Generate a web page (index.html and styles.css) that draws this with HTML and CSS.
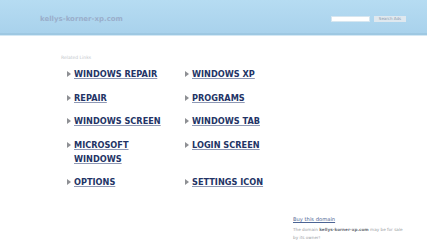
FILE: index.html
```html
<!DOCTYPE html>
<html lang="en">
<head>
    <meta charset="UTF-8">
    <title>kellys-korner-xp.com</title>
    <link rel="stylesheet" href="styles.css">
</head>
<body>

<div class="header">
    <span class="domain">kellys-korner-xp.com</span>
    <form class="search">
        <input type="text" class="search-box">
        <button type="button" class="search-btn">Search Ads</button>
    </form>
</div>

<div class="content">
    <div class="related">Related Links</div>
    <ul class="links">
        <li><a href="#">WINDOWS REPAIR</a></li>
        <li><a href="#">WINDOWS XP</a></li>
        <li><a href="#">REPAIR</a></li>
        <li><a href="#">PROGRAMS</a></li>
        <li><a href="#">WINDOWS SCREEN</a></li>
        <li><a href="#">WINDOWS TAB</a></li>
        <li><a href="#">MICROSOFT WINDOWS</a></li>
        <li><a href="#">LOGIN SCREEN</a></li>
        <li><a href="#">OPTIONS</a></li>
        <li><a href="#">SETTINGS ICON</a></li>
    </ul>

    <div class="sale">
        <a href="#" class="buy">Buy this domain</a>
        <p>The domain <b>kellys-korner-xp.com</b> may be for sale<br>by its owner!</p>
    </div>
</div>

</body>
</html>
```

FILE: styles.css
```css
body {
    margin: 0;
    font-family: "DejaVu Sans", Verdana, sans-serif;
    background: #fff;
}
.header {
    width: 427px;
    height: 35px;
    box-sizing: border-box;
    padding: 0 21px 0 40px;
    display: flex;
    align-items: center;
    justify-content: space-between;
    background: linear-gradient(to bottom, #b6dcf2, #a9d2ec);
    border-bottom: 2px solid #9ec8e2;
    box-shadow: 0 1px 0 #d4e8f4;
    margin-bottom: 2px;
}
.domain {
    font-size: 7px;
    font-weight: bold;
    color: #9aaecb;
    margin-top: 5px;
}
.search {
    display: flex;
    align-items: center;
    margin-top: 5px;
}
.search-box {
    width: 39px;
    height: 6px;
    padding: 0;
    margin: 0 4px 0 0;
    border: 1px solid #d6e6f0;
    background: #fff;
    box-sizing: border-box;
}
.search-btn {
    width: 32px;
    height: 6px;
    padding: 0;
    margin: 0;
    border: none;
    background: #dfe8ef;
    color: #8a9aac;
    font-family: "DejaVu Sans", sans-serif;
    font-size: 4px;
    line-height: 6px;
}
.content {
    padding: 18px 0 0 61px;
}
.related {
    font-size: 4.5px;
    line-height: 6px;
    color: #c4c8cc;
}
.links {
    list-style: none;
    margin: 6px 0 0 6px;
    padding: 0;
    display: grid;
    grid-template-columns: 118px 118px;
    row-gap: 9.5px;
}
.links li {
    display: flex;
    align-items: flex-start;
}
.links li::before {
    content: "";
    flex: none;
    width: 0;
    height: 0;
    margin: 4px 3px 0 0;
    border-top: 3px solid transparent;
    border-bottom: 3px solid transparent;
    border-left: 4px solid #8e9094;
}
.links a {
    font-size: 8.2px;
    font-weight: bold;
    line-height: 14px;
    color: #233466;
    text-decoration: underline;
    text-decoration-color: #8e98b4;
    max-width: 100px;
}
.sale {
    width: 126px;
    margin: 27px 0 0 232px;
}
.buy {
    display: block;
    font-size: 5.2px;
    line-height: 7px;
    color: #4c6494;
    text-decoration: underline;
}
.sale p {
    margin: 3px 0 0;
    font-size: 4.2px;
    line-height: 8px;
    color: #9a9ea4;
}
.sale p b {
    color: #6c7078;
}
```
